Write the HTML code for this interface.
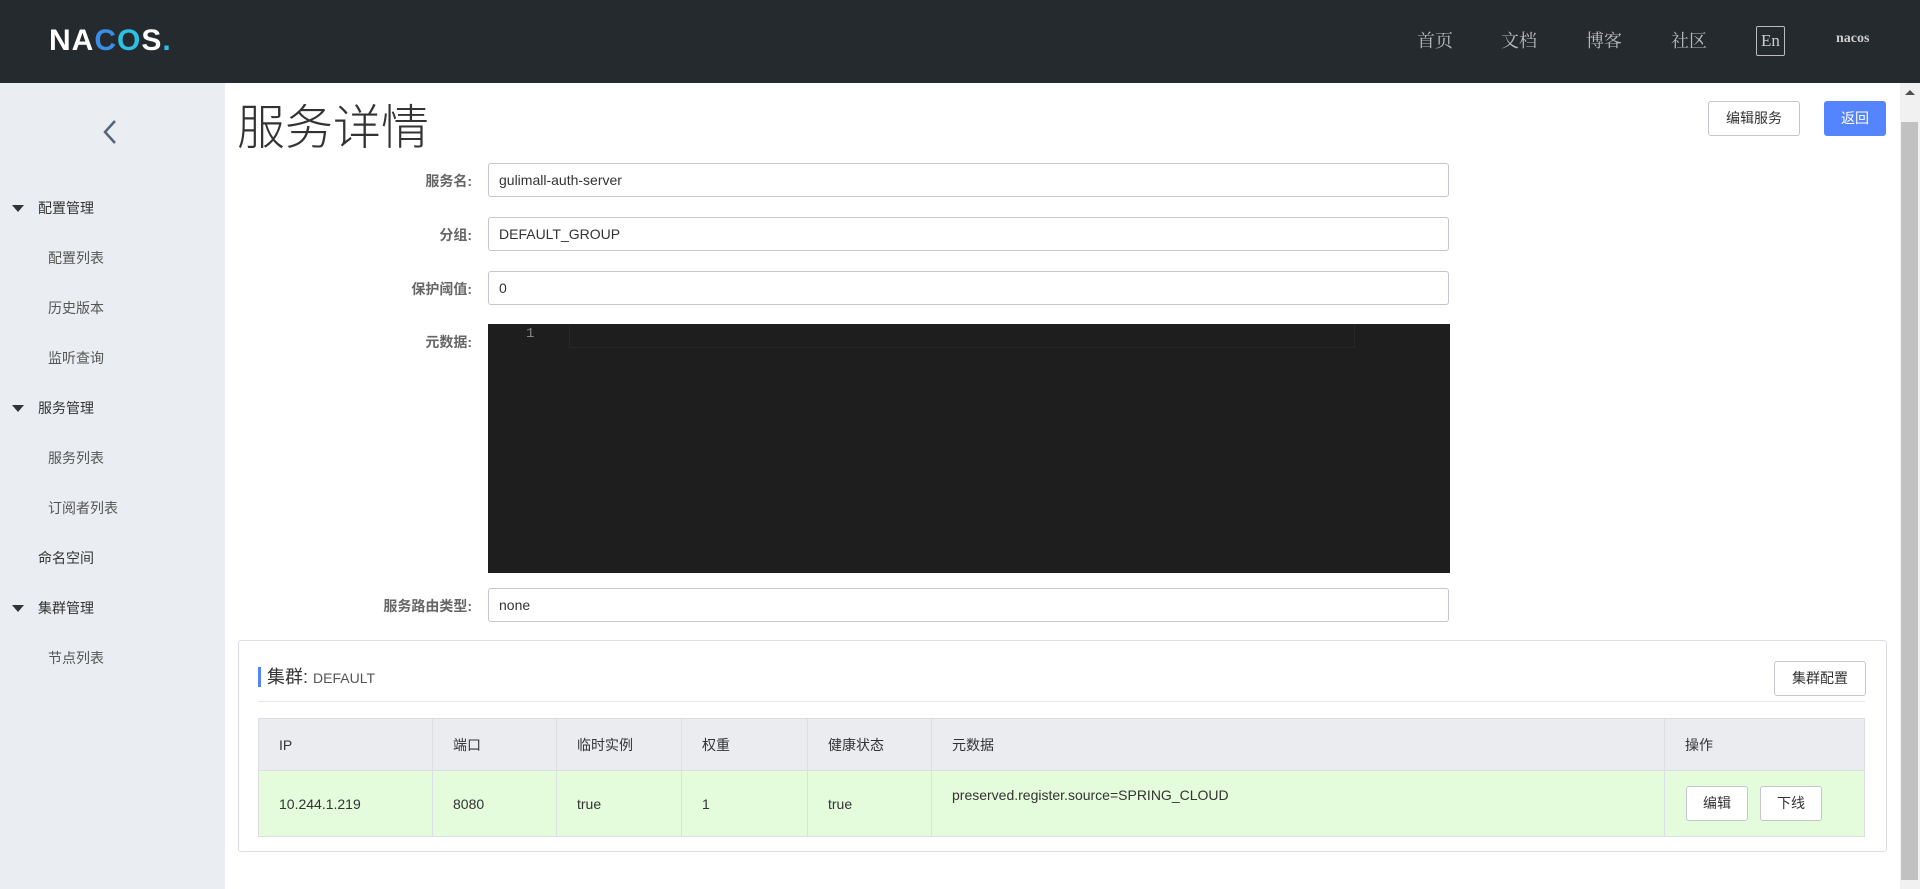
<!DOCTYPE html>
<html><head><meta charset="utf-8">
<style>
*{box-sizing:border-box;margin:0;padding:0}
body{width:1920px;height:889px;overflow:hidden;background:#fff;font-family:"Liberation Sans","Noto Sans CJK SC",sans-serif;font-size:14px;color:#333;position:relative}
.hdr{position:absolute;left:0;top:0;width:1920px;height:83px;background:#252a2f}
.logo{position:absolute;left:49px;top:24px;font-size:30px;font-weight:bold;color:#fff;letter-spacing:1px;font-family:"Liberation Sans",sans-serif}
.nav{position:absolute;top:27px;font-size:18px;color:#bbb;font-family:"Liberation Serif","Noto Serif CJK SC",serif}
.en{position:absolute;left:1756px;top:26px;width:29px;height:30px;border:1px solid #bbb;border-radius:2px;color:#ccc;font-family:"Liberation Serif",serif;font-size:17px;text-align:center;line-height:27px}
.side{position:absolute;left:0;top:83px;width:225px;height:806px;background:#eaedf1}
.si{position:absolute;font-size:14px;color:#333}
.sub{left:48px;color:#555}
.tri{position:absolute;left:12px;width:0;height:0;border-left:6px solid transparent;border-right:6px solid transparent;border-top:7px solid #333}
.title{position:absolute;left:237px;top:88px;font-size:48px;color:#333;font-weight:300}
.btn{position:absolute;border:1px solid #c4c6cf;border-radius:3px;background:#fff;font-size:14px;text-align:center;color:#333}
.lab{position:absolute;right:1448px;font-size:14px;color:#666;font-weight:bold}
.inp{position:absolute;left:488px;width:961px;border:1px solid #c4c6cf;border-radius:3px;height:34px;line-height:32px;padding-left:10px;font-size:14px;color:#333}
.editor{position:absolute;left:488px;top:324px;width:962px;height:249px;background:#1e1e1e}
.panel{position:absolute;left:238px;top:640px;width:1649px;height:212px;border:1px solid #dcdee3;border-radius:3px}
table{position:absolute;left:258px;top:718px;width:1607px;border-collapse:collapse;font-size:14px}
td,th{border:1px solid #dcdee3;text-align:left;font-weight:normal;padding-left:20px}
th{background:#ebecf0;height:52px;color:#333}
td{background:#e4fbdc;height:66px;color:#333}
.scroll{position:absolute;left:1900px;top:83px;width:20px;height:806px;background:#f1f1f1}
.thumb{position:absolute;left:1901px;top:122px;width:17px;height:758px;background:#c1c1c1}
</style></head><body>
<div class="hdr">
  <div class="logo">NA<span style="color:#3a8ee6">C</span><span style="color:#2bc0e4">O</span>S<span style="color:#2bc0e4">.</span></div>
  <div class="nav" style="left:1417px">首页</div>
  <div class="nav" style="left:1501px">文档</div>
  <div class="nav" style="left:1586px">博客</div>
  <div class="nav" style="left:1671px">社区</div>
  <div class="en">En</div>
  <div class="nav" style="left:1836px;top:31px;font-size:14px;font-weight:bold;color:#ccc">nacos</div>
</div>
<div class="side">
  <svg style="position:absolute;left:100px;top:35px" width="20" height="28" viewBox="0 0 20 28"><path d="M15 3 L5 14 L15 25" fill="none" stroke="#546478" stroke-width="2.5"/></svg>
  <div class="tri" style="top:122px"></div><div class="si" style="left:38px;top:115px">配置管理</div>
  <div class="si sub" style="top:165px">配置列表</div>
  <div class="si sub" style="top:215px">历史版本</div>
  <div class="si sub" style="top:265px">监听查询</div>
  <div class="tri" style="top:322px"></div><div class="si" style="left:38px;top:315px">服务管理</div>
  <div class="si sub" style="top:365px">服务列表</div>
  <div class="si sub" style="top:415px">订阅者列表</div>
  <div class="si" style="left:38px;top:465px">命名空间</div>
  <div class="tri" style="top:522px"></div><div class="si" style="left:38px;top:515px">集群管理</div>
  <div class="si sub" style="top:565px">节点列表</div>
</div>
<div class="title">服务详情</div>
<div class="btn" style="left:1708px;top:101px;width:92px;height:35px;line-height:33px">编辑服务</div>
<div class="btn" style="left:1824px;top:101px;width:62px;height:35px;line-height:33px;background:#5584ff;border-color:#5584ff;color:#fff">返回</div>
<div class="lab" style="top:171px">服务名:</div>
<div class="inp" style="top:163px">gulimall-auth-server</div>
<div class="lab" style="top:225px">分组:</div>
<div class="inp" style="top:217px">DEFAULT_GROUP</div>
<div class="lab" style="top:279px">保护阈值:</div>
<div class="inp" style="top:271px">0</div>
<div class="lab" style="top:332px">元数据:</div>
<div class="editor">
  <div style="position:absolute;left:38px;top:2px;color:#858585;font-family:'Liberation Mono',monospace;font-size:14px">1</div>
  <div style="position:absolute;left:81px;top:0;width:786px;height:24px;border:1px solid #282828;border-top:none"></div>
</div>
<div class="lab" style="top:596px">服务路由类型:</div>
<div class="inp" style="top:588px">none</div>
<div class="panel"></div>
<div style="position:absolute;left:258px;top:667px;width:3px;height:20px;background:#5584ff"></div>
<div style="position:absolute;left:267px;top:663px;font-size:18px;color:#333">集群: <span style="font-size:14px;color:#555">DEFAULT</span></div>
<div class="btn" style="left:1774px;top:661px;width:92px;height:35px;line-height:33px">集群配置</div>
<div style="position:absolute;left:258px;top:701px;width:1607px;height:1px;background:#e6e7eb"></div>
<table>
<tr><th style="width:174px">IP</th><th style="width:124px">端口</th><th style="width:125px">临时实例</th><th style="width:126px">权重</th><th style="width:124px">健康状态</th><th style="width:733px">元数据</th><th>操作</th></tr>
<tr><td>10.244.1.219</td><td>8080</td><td>true</td><td>1</td><td>true</td><td style="vertical-align:top;padding-top:16px">preserved.register.source=SPRING_CLOUD</td><td></td></tr>
</table>
<div class="btn" style="left:1686px;top:786px;width:62px;height:35px;line-height:33px">编辑</div>
<div class="btn" style="left:1760px;top:786px;width:62px;height:35px;line-height:33px">下线</div>
<div class="scroll"></div>
<div class="thumb"></div>
<svg style="position:absolute;left:1904px;top:88px" width="12" height="8"><path d="M1 7 L6 2 L11 7Z" fill="#505050"/></svg>
</body></html>
